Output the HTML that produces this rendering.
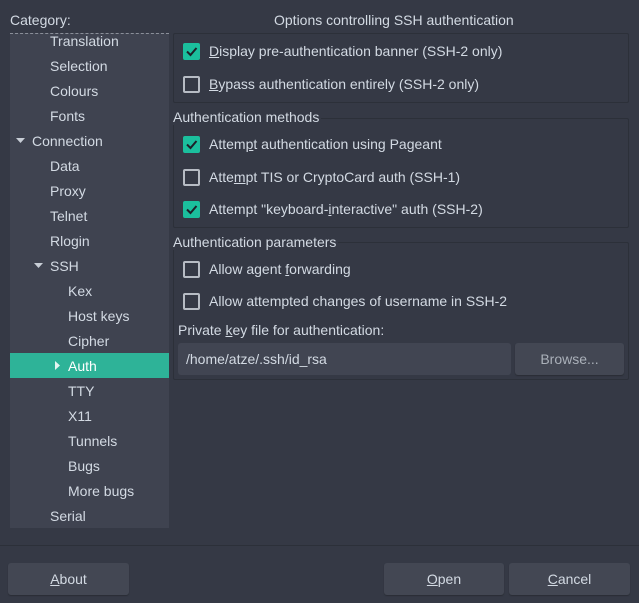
<!DOCTYPE html>
<html><head><meta charset="utf-8"><style>
*{margin:0;padding:0;box-sizing:border-box}
body{width:639px;height:603px;background:#353945;font-family:"Liberation Sans",sans-serif;font-size:14px;color:#d3dae3;position:relative;overflow:hidden}
.a{position:absolute;white-space:nowrap;line-height:16px}
.tree{position:absolute;left:10px;top:33px;width:159px;height:495px;background:#3f4350;border-top:1px dashed #8a8f99}
.sel{position:absolute;left:10px;top:353px;width:159px;height:25px;background:#2eb398}
.grp{position:absolute;border:1px solid #2c3039;border-radius:2px}
.cb{position:absolute;width:17px;height:17px;border-radius:2px}
.on{background:#1bbf9d}
.off{border:2px solid #b7bcc4}
.btn{position:absolute;background:#434753;border-radius:3px;height:32px;text-align:center;line-height:32px;color:#d3dae3;box-shadow:0 1px 1px #2a2d35}
.lbl{background:#353945;padding-right:2px}
u{text-decoration:underline}
</style></head><body>
<div class="a" style="left:10px;top:12px">Cate<u>g</u>ory:</div>
<div class="a" style="left:274px;top:12px">Options controlling SSH authentication</div>
<div class="tree"></div>
<div class="sel"></div>
<div class="a" style="left:50px;top:33px">Translation</div>
<div class="a" style="left:50px;top:58px">Selection</div>
<div class="a" style="left:50px;top:83px">Colours</div>
<div class="a" style="left:50px;top:108px">Fonts</div>
<svg class="a" style="left:15px;top:137px" width="12" height="8"><path d="M1 1h9l-4.5 5z" fill="#c8ced6"/></svg>
<div class="a" style="left:32px;top:133px">Connection</div>
<div class="a" style="left:50px;top:158px">Data</div>
<div class="a" style="left:50px;top:183px">Proxy</div>
<div class="a" style="left:50px;top:208px">Telnet</div>
<div class="a" style="left:50px;top:233px">Rlogin</div>
<svg class="a" style="left:33px;top:262px" width="12" height="8"><path d="M1 1h9l-4.5 5z" fill="#c8ced6"/></svg>
<div class="a" style="left:50px;top:258px">SSH</div>
<div class="a" style="left:68px;top:283px">Kex</div>
<div class="a" style="left:68px;top:308px">Host keys</div>
<div class="a" style="left:68px;top:333px">Cipher</div>
<svg class="a" style="left:54px;top:360px" width="8" height="12"><path d="M1 1v9l5-4.5z" fill="#e6f5f1"/></svg>
<div class="a" style="left:68px;top:358px;color:#fff">Auth</div>
<div class="a" style="left:68px;top:383px">TTY</div>
<div class="a" style="left:68px;top:408px">X11</div>
<div class="a" style="left:68px;top:433px">Tunnels</div>
<div class="a" style="left:68px;top:458px">Bugs</div>
<div class="a" style="left:68px;top:483px">More bugs</div>
<div class="a" style="left:50px;top:508px">Serial</div>

<div class="grp" style="left:173px;top:33px;width:456px;height:70px"></div>
<div class="cb on" style="left:183px;top:43px"></div><svg class="a" style="left:183px;top:43px" width="17" height="17"><path d="M4 8.5l3.5 3.5 6-7" stroke="#1d2028" stroke-width="2" fill="none"/></svg>
<div class="a" style="left:209px;top:43px"><u>D</u>isplay pre-authentication banner (SSH-2 only)</div>
<div class="cb off" style="left:183px;top:76px"></div>
<div class="a" style="left:209px;top:76px"><u>B</u>ypass authentication entirely (SSH-2 only)</div>

<div class="grp" style="left:173px;top:118px;width:456px;height:110px"></div>
<div class="a lbl" style="left:173px;top:109px">Authentication methods</div>
<div class="cb on" style="left:183px;top:136px"></div><svg class="a" style="left:183px;top:136px" width="17" height="17"><path d="M4 8.5l3.5 3.5 6-7" stroke="#1d2028" stroke-width="2" fill="none"/></svg>
<div class="a" style="left:209px;top:136px">Attem<u>p</u>t authentication using Pageant</div>
<div class="cb off" style="left:183px;top:169px"></div>
<div class="a" style="left:209px;top:169px">Atte<u>m</u>pt TIS or CryptoCard auth (SSH-1)</div>
<div class="cb on" style="left:183px;top:201px"></div><svg class="a" style="left:183px;top:201px" width="17" height="17"><path d="M4 8.5l3.5 3.5 6-7" stroke="#1d2028" stroke-width="2" fill="none"/></svg>
<div class="a" style="left:209px;top:201px">Attempt "keyboard-<u>i</u>nteractive" auth (SSH-2)</div>

<div class="grp" style="left:173px;top:242px;width:456px;height:138px"></div>
<div class="a lbl" style="left:173px;top:234px">Authentication parameters</div>
<div class="cb off" style="left:183px;top:261px"></div>
<div class="a" style="left:209px;top:261px">Allow agent <u>f</u>orwarding</div>
<div class="cb off" style="left:183px;top:293px"></div>
<div class="a" style="left:209px;top:293px">Allow attempted changes of username in SSH-2</div>
<div class="a" style="left:178px;top:322px">Private <u>k</u>ey file for authentication:</div>
<div style="position:absolute;left:178px;top:343px;width:333px;height:32px;background:#414552;border-radius:3px"></div>
<div class="a" style="left:186px;top:351px">/home/atze/.ssh/id_rsa</div>
<div class="btn" style="left:515px;top:343px;width:109px;color:#aab0b9">Browse...</div>

<div style="position:absolute;left:0;top:545px;width:639px;height:1px;background:#2c3039"></div>
<div class="btn" style="left:8px;top:563px;width:121px"><u>A</u>bout</div>
<div class="btn" style="left:384px;top:563px;width:120px"><u>O</u>pen</div>
<div class="btn" style="left:509px;top:563px;width:121px"><u>C</u>ancel</div>
</body></html>
